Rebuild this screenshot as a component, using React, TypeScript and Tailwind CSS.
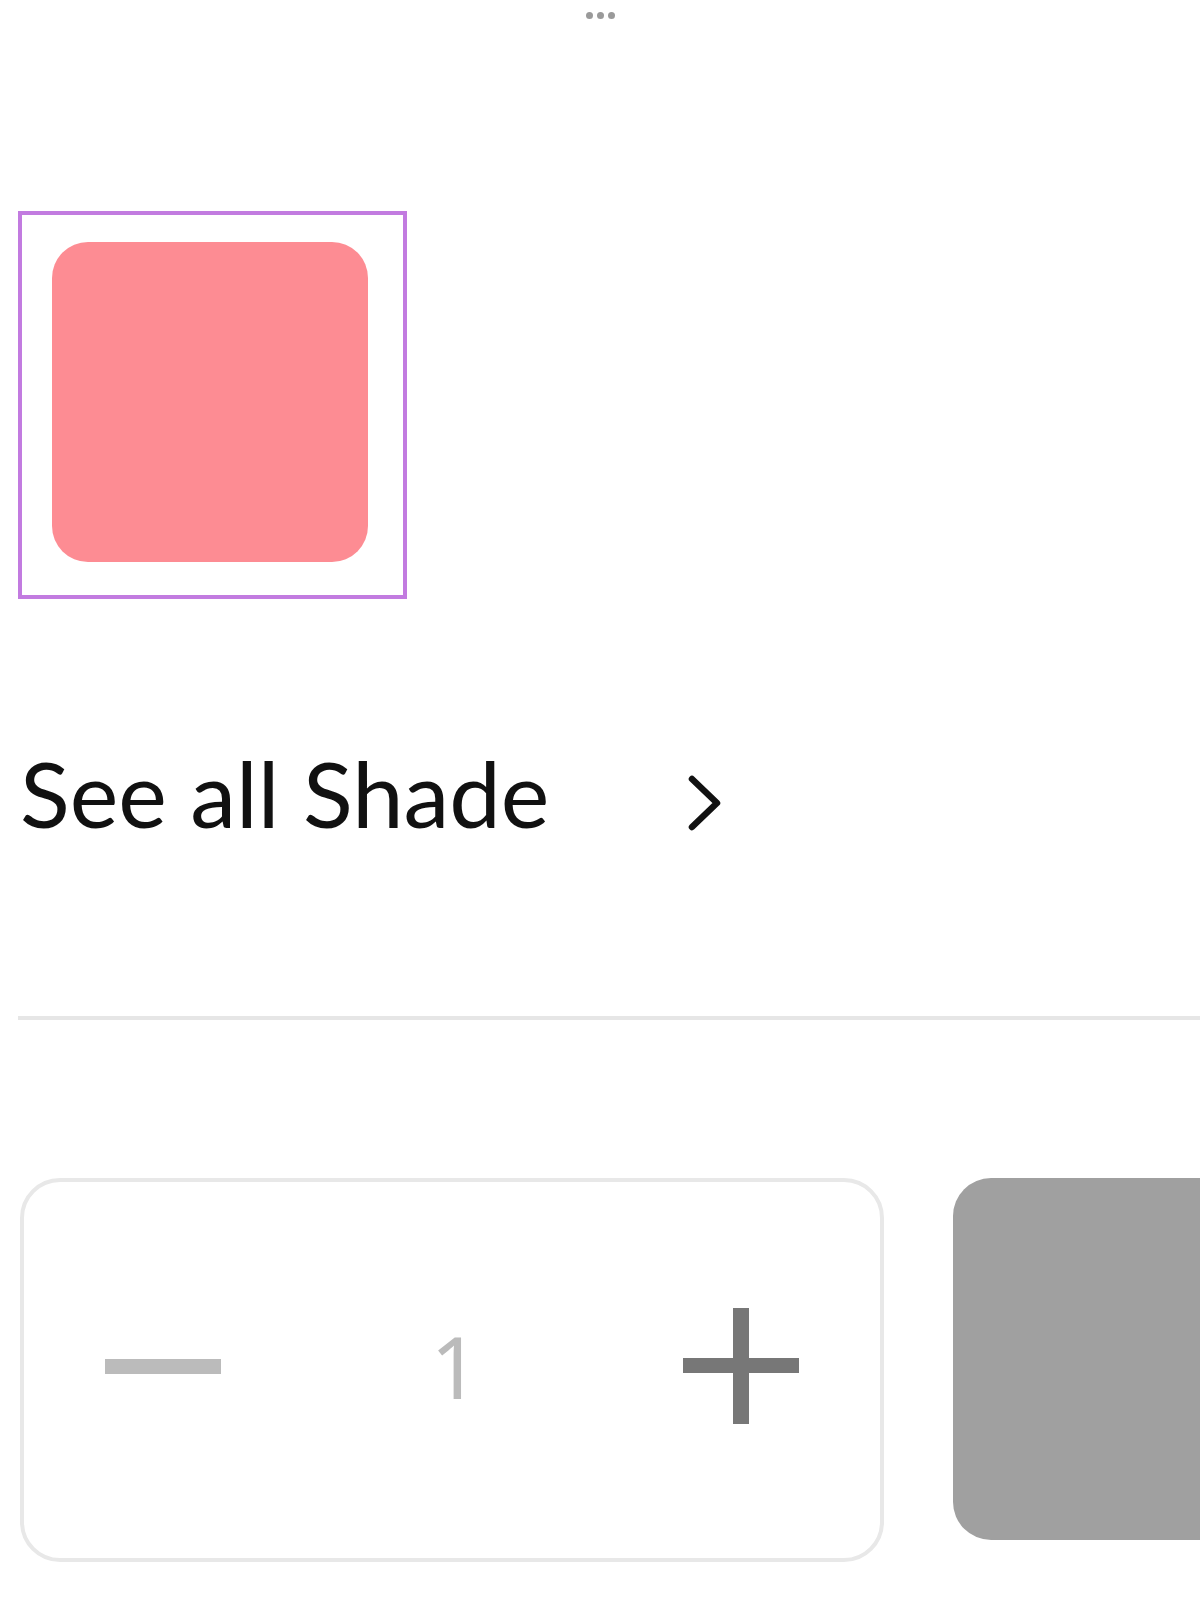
import React from 'react';

// Shade picker + quantity row, zoomed mobile view
const Dots = () => (
  <div className="flex h-[30px] items-center justify-center gap-[4px]">
    {[0, 1, 2].map((i) => (
      <span key={i} className="block h-[7px] w-[7px] rounded-full bg-[#9a9a9a]" />
    ))}
  </div>
);

const Chevron = () => (
  <svg width="40" height="58" viewBox="0 0 40 58" fill="none" className="block">
    <polyline
      points="8,5 33,29 8,53"
      stroke="#111"
      strokeWidth="6.5"
      strokeLinecap="round"
      strokeLinejoin="round"
    />
  </svg>
);

export default function App() {
  return (
    <div
      className="w-[1200px] overflow-hidden bg-white pb-[37px]"
      style={{ fontFamily: 'Lato, "Noto Sans", sans-serif' }}
    >
      <Dots />

      <div className="pl-[18px] pt-[181px]">
        <div className="h-[388px] w-[389px] border-[4px] border-[#c27be0] pl-[30px] pt-[27px]">
          <div className="h-[320px] w-[316px] rounded-[36px] bg-[#fd8c93]" />
        </div>
      </div>

      <div className="mt-[146px] flex h-[95px] items-center pl-[20px]">
        <span className="text-[92px] leading-none text-[#111]">See all Shade</span>
        <span className="ml-[135px] mt-[20px]">
          <Chevron />
        </span>
      </div>

      <div className="ml-[18px] mt-[176px] h-[4px] bg-[#e6e6e6]" />

      <div className="mt-[158px] flex items-start pl-[20px]">
        <div className="flex h-[384px] w-[864px] shrink-0 items-center justify-between rounded-[40px] border-[4px] border-[#e8e8e8] px-[81px] pb-[8px]">
          <span className="block h-[15px] w-[116px] bg-[#bbbbbb]" />
          <span
            className="pl-[6px] text-[86px] font-normal leading-none text-[#bbbbbb]"
            style={{ fontFamily: '"Noto Sans", sans-serif' }}
          >
            1
          </span>
          <span className="relative block h-[116px] w-[116px]">
            <span className="absolute left-0 top-[50px] block h-[15px] w-[116px] bg-[#777777]" />
            <span className="absolute left-[50px] top-0 block h-[116px] w-[16px] bg-[#777777]" />
          </span>
        </div>
        <div className="ml-[69px] h-[362px] w-[320px] shrink-0 rounded-[38px] bg-[#a0a0a0]" />
      </div>
    </div>
  );
}
